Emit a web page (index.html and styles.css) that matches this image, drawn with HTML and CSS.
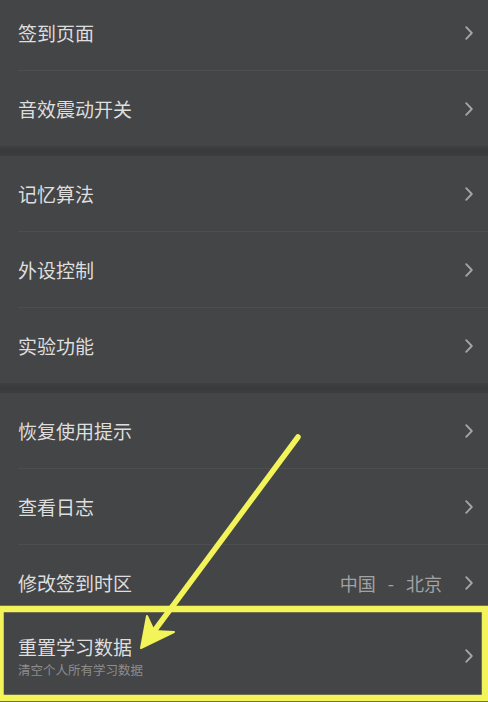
FILE: index.html
```html
<!DOCTYPE html>
<html lang="zh-CN">
<head>
<meta charset="utf-8">
<title>设置</title>
<link rel="stylesheet" href="styles.css">
</head>
<body>
<div class="page">
  <div class="list">
    <div class="group group-first">
      <div class="row"><span class="title">签到页面</span><span class="chev"></span></div>
      <div class="row"><span class="title">音效震动开关</span><span class="chev"></span></div>
    </div>
    <div class="gap"></div>
    <div class="group">
      <div class="row"><span class="title">记忆算法</span><span class="chev"></span></div>
      <div class="row"><span class="title">外设控制</span><span class="chev"></span></div>
      <div class="row"><span class="title">实验功能</span><span class="chev"></span></div>
    </div>
    <div class="gap"></div>
    <div class="group">
      <div class="row"><span class="title">恢复使用提示</span><span class="chev"></span></div>
      <div class="row"><span class="title">查看日志</span><span class="chev"></span></div>
      <div class="row"><span class="title">修改签到时区</span><span class="value">中国 - 北京</span><span class="chev"></span></div>
      <div class="row row-tall">
        <div class="text-block">
          <span class="title">重置学习数据</span>
          <span class="sub">清空个人所有学习数据</span>
        </div>
        <span class="chev"></span>
      </div>
    </div>
  </div>
  <svg class="annot" width="488" height="702" viewBox="0 0 488 702" xmlns="http://www.w3.org/2000/svg">
    <rect x="0.5" y="609" width="484.5" height="89" fill="none" stroke="#f2f45a" stroke-width="6.5"/>
    <line x1="298" y1="437" x2="149" y2="638" stroke="#f2f45a" stroke-width="5.5" stroke-linecap="round"/>
    <polygon points="141,648 147,616 154,631 174,632" fill="#f2f45a" stroke="#f2f45a" stroke-width="2" stroke-linejoin="round"/>
  </svg>
</div>
</body>
</html>
```

FILE: styles.css
```css
html, body {
  margin: 0;
  padding: 0;
  background: #444547;
}

.page {
  position: relative;
  width: 488px;
  height: 702px;
  overflow: hidden;
  font-family: "Noto Sans CJK SC", "Noto Sans", sans-serif;
}

.list {
  margin-top: -5px;
}

.group {
  background: #444547;
}

.gap {
  height: 10px;
  background: linear-gradient(#3f4042, #393a3c 50%, #3c3d3f);
}

.row {
  display: flex;
  align-items: center;
  height: 75px;
  margin-left: 18px;
  padding-right: 15px;
  box-sizing: border-box;
}

.row + .row {
  border-top: 1px solid #4d4e50;
  height: 76px;
}

.title {
  flex: 1;
  font-size: 19px;
  line-height: 24px;
  color: #dedede;
}

.value {
  font-size: 18px;
  line-height: 24px;
  color: #a2a2a2;
  margin-right: 23px;
  word-spacing: 8px;
}

.chev {
  width: 8px;
  height: 14px;
  flex: none;
  background: no-repeat center / 8px 14px url("data:image/svg+xml,%3Csvg xmlns='http://www.w3.org/2000/svg' width='8' height='14' viewBox='0 0 8 14'%3E%3Cpath d='M1.2 1.2 L6.8 7 L1.2 12.8' fill='none' stroke='%23a6a6a6' stroke-width='1.8' stroke-linecap='round' stroke-linejoin='round'/%3E%3C/svg%3E");
}

.row.row-tall {
  height: 71px;
  border-top-color: #444547;
}

.text-block {
  flex: 1;
  display: flex;
  flex-direction: column;
  gap: 3px;
}

.sub {
  font-size: 12.5px;
  line-height: 16px;
  color: #8d8d8d;
}

.annot {
  position: absolute;
  left: 0;
  top: 0;
  pointer-events: none;
}
```
